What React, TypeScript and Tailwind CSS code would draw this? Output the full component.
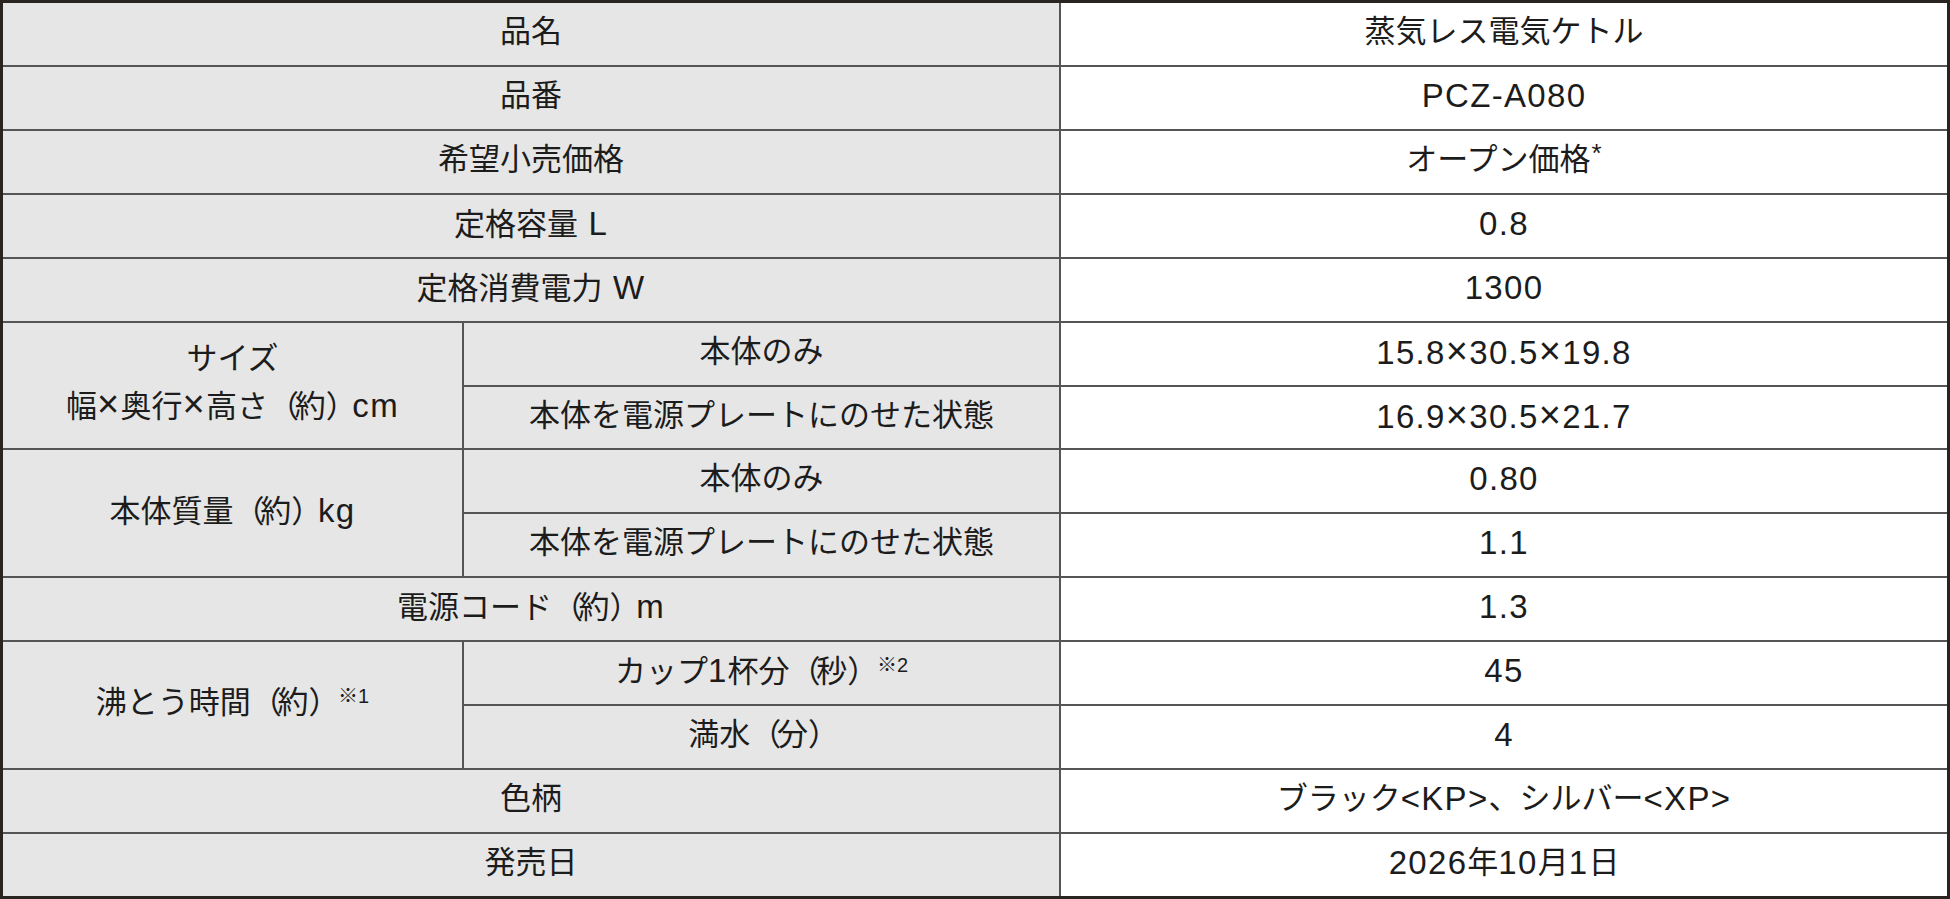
import type { ReactNode } from "react";

// latin runs are set a touch larger with some tracking, like the printed spec sheet
function T({ s }: { s: string }) {
  const parts = s.split(/([\x20-\x7E×]+|[（）])/).filter(Boolean);
  return (
    <>
      {parts.map((p, i) => {
        if (p === "（" || p === "）")
          return (
            <span key={i} className="tracking-[-0.14em]">
              {p}
            </span>
          );
        if (/^[\x20-\x7E×]+$/.test(p))
          return (
            <span key={i} className="text-[33px] tracking-[0.04em]">
              {p.split(/(×)/).map((q, j) =>
                q === "×" ? (
                  <span key={j} className="text-[38px]">×</span>
                ) : (
                  <span key={j}>{q}</span>
                )
              )}
            </span>
          );
        return <span key={i}>{p}</span>;
      })}
    </>
  );
}

function Note({ s }: { s: string }) {
  return <span className="text-[20px] relative -top-[10px] ml-[3px]">{s}</span>;
}

function Label({ children, className = "" }: { children: ReactNode; className?: string }) {
  return (
    <div className={`bg-[#e6e6e6] flex flex-col items-center justify-center text-center pb-[5px] ${className}`}>
      {children}
    </div>
  );
}

function Value({ children }: { children: ReactNode }) {
  return <div className="bg-white flex items-center justify-center text-center pb-[5px]">{children}</div>;
}

export default function App() {
  return (
    <div className="w-[1950px] h-[899px] bg-white">
      <div className="h-full border-[3px] border-[#2a2421] bg-[#555555] grid grid-cols-[459px_595px_1fr] grid-rows-[repeat(14,1fr)] gap-[2px] font-['Liberation_Sans','Noto_Sans_CJK_JP',sans-serif] text-[31px] leading-none text-[#1c1c1c]">
        <Label className="col-span-2"><div><T s="品名" /></div></Label>
        <Value><T s="蒸気レス電気ケトル" /></Value>

        <Label className="col-span-2"><div><T s="品番" /></div></Label>
        <Value><T s="PCZ-A080" /></Value>

        <Label className="col-span-2"><div><T s="希望小売価格" /></div></Label>
        <Value>
          <span>
            <T s="オープン価格" />
            <span className="text-[26px] relative -top-[8px] ml-[1px]">*</span>
          </span>
        </Value>

        <Label className="col-span-2"><div><T s="定格容量 L" /></div></Label>
        <Value><T s="0.8" /></Value>

        <Label className="col-span-2"><div><T s="定格消費電力 W" /></div></Label>
        <Value><T s="1300" /></Value>

        {/* size */}
        <Label className="row-span-2 gap-[11px]">
          <div><T s="サイズ" /></div>
          <div><T s="幅×奥行×高さ（約）cm" /></div>
        </Label>
        <Label><div><T s="本体のみ" /></div></Label>
        <Value><T s="15.8×30.5×19.8" /></Value>
        <Label><div><T s="本体を電源プレートにのせた状態" /></div></Label>
        <Value><T s="16.9×30.5×21.7" /></Value>

        {/* weight */}
        <Label className="row-span-2"><div><T s="本体質量（約）kg" /></div></Label>
        <Label><div><T s="本体のみ" /></div></Label>
        <Value><T s="0.80" /></Value>
        <Label><div><T s="本体を電源プレートにのせた状態" /></div></Label>
        <Value><T s="1.1" /></Value>

        <Label className="col-span-2"><div><T s="電源コード（約）m" /></div></Label>
        <Value><T s="1.3" /></Value>

        {/* boiling time */}
        <Label className="row-span-2">
          <div><T s="沸とう時間（約）" /><Note s="※1" /></div>
        </Label>
        <Label><div><T s="カップ1杯分（秒）" /><Note s="※2" /></div></Label>
        <Value><T s="45" /></Value>
        <Label><div><T s="満水（分）" /></div></Label>
        <Value><T s="4" /></Value>

        <Label className="col-span-2"><div><T s="色柄" /></div></Label>
        <Value><T s="ブラック<KP>、シルバー<XP>" /></Value>

        <Label className="col-span-2"><div><T s="発売日" /></div></Label>
        <Value><T s="2026年10月1日" /></Value>
      </div>
    </div>
  );
}
